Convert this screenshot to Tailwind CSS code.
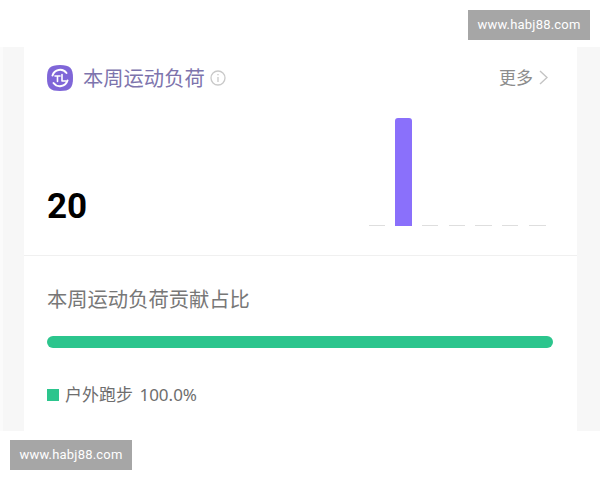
<!DOCTYPE html>
<html lang="zh-CN">
<head>
    <meta charset="UTF-8">
    <title>本周运动负荷</title>
    <script src="https://cdn.jsdelivr.net/npm/@tailwindcss/browser@4"></script>
</head>
<body class="bg-white font-['Noto_Sans','Noto_Sans_CJK_SC',sans-serif]">
    <div class="relative w-[600px] h-[480px] overflow-hidden bg-white">
        <!-- Watermarks -->
        <div class="absolute left-[468px] top-[10px] w-[122px] h-[30px] bg-[#a6a6a6] text-white text-[13px] font-['Roboto',sans-serif] tracking-[0.2px] flex items-center justify-center">www.habj88.com</div>
        <div class="absolute left-[10px] top-[440px] w-[122px] h-[30px] bg-[#a6a6a6] text-white text-[13px] font-['Roboto',sans-serif] tracking-[0.2px] flex items-center justify-center">www.habj88.com</div>

        <div class="h-[47px]"></div>

        <div class="bg-[#f7f7f7] h-[384px] pl-[21px] pr-[23px] border-l-[3px] border-[#fbfbfb]">
            <div class="bg-white h-full">
                <!-- Header -->
                <div class="flex items-center h-[61px] pl-[23px] pr-[29px]">
                    <svg class="w-[26px] h-[26px]" viewBox="0 0 26 26" fill="none">
                        <path d="M13 0C23 0 26 3 26 13C26 23 23 26 13 26C3 26 0 23 0 13C0 3 3 0 13 0Z" fill="#7f66d8"/>
                        <path d="M5.5 10.5A8 8 0 0 1 19.5 8" stroke="#fff" stroke-width="2" stroke-linecap="round"/>
                        <path d="M20.5 15.5A8 8 0 0 1 6.5 18" stroke="#fff" stroke-width="2" stroke-linecap="round"/>
                        <path d="M8 11H13M10.5 11V16.5M15 9.5V16H19" stroke="#fff" stroke-width="1.6" stroke-linecap="round" stroke-linejoin="round"/>
                    </svg>
                    <span class="ml-[10px] mt-[1px] text-[20.3px] leading-[28px] text-[#7d74ad]">本周运动负荷</span>
                    <svg class="ml-[5px] w-[16px] h-[16px]" viewBox="0 0 16 16" fill="none">
                        <circle cx="8" cy="8" r="7" stroke="#c9c9c9" stroke-width="1.3"/>
                        <path d="M8 7V12M8 4V5.2" stroke="#c9c9c9" stroke-width="1.3"/>
                    </svg>
                    <span class="ml-auto text-[17px] leading-[24px] text-[#8c8c8c]">更多</span>
                    <svg class="ml-[6px] w-[9px] h-[15px]" viewBox="0 0 9 15" fill="none">
                        <path d="M1 1L8 7.5L1 14" stroke="#c4c4c4" stroke-width="1.4"/>
                    </svg>
                </div>

                <!-- Chart -->
                <div class="flex items-end justify-between h-[148px] border-b border-[#f0f0f0] pl-[23px] pr-[31px] pb-[29px]">
                    <span class="font-['Roboto',sans-serif] text-[35px] leading-[38px] font-bold text-black">20</span>
                    <div class="flex items-end gap-[10px] h-[108px]">
                        <div class="w-[16px] h-[1px] bg-[#dedede]"></div>
                        <div class="w-[17px] h-[108px] bg-[#8a70fb] rounded-t-[3px]"></div>
                        <div class="w-[16px] h-[1px] bg-[#dedede]"></div>
                        <div class="ml-[1px] w-[16px] h-[1px] bg-[#dedede]"></div>
                        <div class="w-[17px] h-[1px] bg-[#dedede]"></div>
                        <div class="w-[16px] h-[1px] bg-[#dedede]"></div>
                        <div class="ml-[1px] w-[17px] h-[1px] bg-[#dedede]"></div>
                    </div>
                </div>

                <!-- Share -->
                <div class="pl-[23px] pr-[24px] pt-[28px]">
                    <div class="text-[20.3px] leading-[30px] text-[#777777]">本周运动负荷贡献占比</div>
                    <div class="mt-[22px] h-[12px] rounded-full bg-[#2cc58d]"></div>
                    <div class="mt-[34px] flex items-center h-[26px]">
                        <span class="w-[12px] h-[12px] bg-[#2cc58d]"></span>
                        <span class="ml-[6px] text-[17px] leading-[26px] text-[#6e6e6e] [word-spacing:2px]">户外跑步 100.0%</span>
                    </div>
                </div>
            </div>
        </div>
    </div>
</body>
</html>
